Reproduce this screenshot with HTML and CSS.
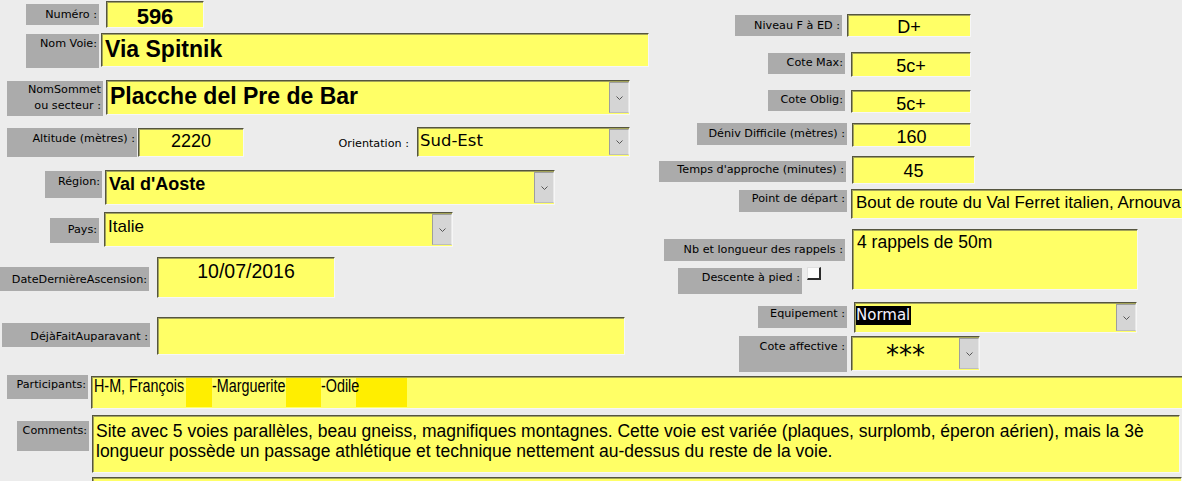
FILE: index.html
```html
<!DOCTYPE html>
<html lang="fr">

<head>
    <meta charset="UTF-8">
    <meta name="viewport" content="width=device-width, initial-scale=1.0">
    <title>Voies</title>
    <link rel="stylesheet" href="styles.css">
</head>

<body>
    <div class="form">
        <div class="top">
            <div class="col-left">
                <div class="row row-numero">
                    <div class="lbl">Numéro :</div>
                    <div class="fld v-num">596</div>
                </div>
                <div class="row row-voie">
                    <div class="lbl">Nom Voie:</div>
                    <div class="fld v-voie">Via Spitnik</div>
                </div>
                <div class="row row-sommet">
                    <div class="lbl">NomSommet<br>ou secteur :</div>
                    <div class="fld combo">
                        <div class="val v-sommet">Placche del Pre de Bar</div>
                        <div class="btn"><svg width="7" height="4" viewBox="0 0 7 4"><polyline points="0.5,0.5 3.5,3.5 6.5,0.5" fill="none" stroke="#555" stroke-width="1"/></svg></div>
                    </div>
                </div>
                <div class="row row-alt">
                    <div class="lbl">Altitude (mètres) :</div>
                    <div class="fld v-alt">2220</div>
                    <div class="plain">Orientation :</div>
                    <div class="fld combo f-orient">
                        <div class="val v-orient">Sud-Est</div>
                        <div class="btn"><svg width="7" height="4" viewBox="0 0 7 4"><polyline points="0.5,0.5 3.5,3.5 6.5,0.5" fill="none" stroke="#555" stroke-width="1"/></svg></div>
                    </div>
                </div>
                <div class="row row-region">
                    <div class="lbl">Région:</div>
                    <div class="fld combo">
                        <div class="val v-region">Val d'Aoste</div>
                        <div class="btn"><svg width="7" height="4" viewBox="0 0 7 4"><polyline points="0.5,0.5 3.5,3.5 6.5,0.5" fill="none" stroke="#555" stroke-width="1"/></svg></div>
                    </div>
                </div>
                <div class="row row-pays">
                    <div class="lbl">Pays:</div>
                    <div class="fld combo">
                        <div class="val v-pays">Italie</div>
                        <div class="btn"><svg width="7" height="4" viewBox="0 0 7 4"><polyline points="0.5,0.5 3.5,3.5 6.5,0.5" fill="none" stroke="#555" stroke-width="1"/></svg></div>
                    </div>
                </div>
                <div class="row row-date">
                    <div class="lbl">DateDernièreAscension:</div>
                    <div class="fld v-date">10/07/2016</div>
                </div>
                <div class="row row-deja">
                    <div class="lbl">DéjàFaitAuparavant :</div>
                    <div class="fld"></div>
                </div>
            </div>

            <div class="col-right">
                <div class="row r-niveau">
                    <div class="lbl">Niveau F à ED :</div>
                    <div class="fld v-c v-niveau">D+</div>
                </div>
                <div class="row r-max">
                    <div class="lbl">Cote Max:</div>
                    <div class="fld v-c">5c+</div>
                </div>
                <div class="row r-oblig">
                    <div class="lbl">Cote Oblig:</div>
                    <div class="fld v-c">5c+</div>
                </div>
                <div class="row r-deniv">
                    <div class="lbl">Déniv Difficile (mètres) :</div>
                    <div class="fld v-c">160</div>
                </div>
                <div class="row r-temps">
                    <div class="lbl">Temps d'approche (minutes) :</div>
                    <div class="fld v-c">45</div>
                </div>
                <div class="row r-depart">
                    <div class="lbl">Point de départ :</div>
                    <div class="fld v-txt">Bout de route du Val Ferret italien, Arnouva</div>
                </div>
                <div class="row r-rappels">
                    <div class="sub">
                        <div class="lbl l-nb">Nb et longueur des rappels :</div>
                        <div class="sub-row">
                            <div class="lbl l-desc">Descente à pied :</div>
                            <div class="check"></div>
                        </div>
                    </div>
                    <div class="fld v-txt v-rappels">4 rappels de 50m</div>
                </div>
                <div class="row r-equip">
                    <div class="lbl">Equipement :</div>
                    <div class="fld combo">
                        <div class="val v-equip"><span class="sel">Normal</span></div>
                        <div class="btn"><svg width="7" height="4" viewBox="0 0 7 4"><polyline points="0.5,0.5 3.5,3.5 6.5,0.5" fill="none" stroke="#555" stroke-width="1"/></svg></div>
                    </div>
                </div>
                <div class="row r-affect">
                    <div class="lbl">Cote affective :</div>
                    <div class="fld combo">
                        <div class="val v-stars">***</div>
                        <div class="btn"><svg width="7" height="4" viewBox="0 0 7 4"><polyline points="0.5,0.5 3.5,3.5 6.5,0.5" fill="none" stroke="#555" stroke-width="1"/></svg></div>
                    </div>
                </div>
            </div>
        </div>

        <div class="row row-part">
            <div class="lbl">Participants:</div>
            <div class="fld v-part">
                <span class="t t1"><span>H-M, François</span></span><span class="mask m1"></span><span class="t t2"><span>-Marguerite</span></span><span class="mask m2"></span><span class="t t3"><span>-Odile</span></span><span class="mask m3"></span>
            </div>
        </div>
        <div class="row row-comm">
            <div class="lbl">Comments:</div>
            <div class="fld v-comm">Site avec 5 voies parallèles, beau gneiss, magnifiques montagnes. Cette voie est variée (plaques, surplomb, éperon aérien), mais la 3è<br>longueur possède un passage athlétique et technique nettement au-dessus du reste de la voie.</div>
        </div>
        <div class="row row-next">
            <div class="fld"></div>
        </div>
    </div>
</body>

</html>
```
FILE: styles.css
```css
html,
body {
    margin: 0;
    padding: 0;
    overflow: hidden;
}

body {
    width: 1182px;
    height: 481px;
    background: #ececec;
    color: #000;
}

.top {
    display: flex;
    height: 375px;
}

.col-left {
    width: 655px;
    flex-shrink: 0;
    padding-top: 1px;
}

.col-right {
    width: 527px;
    flex-shrink: 0;
    padding-top: 14px;
}

.row {
    display: flex;
    align-items: flex-start;
    box-sizing: border-box;
}

/* labels */
.lbl {
    flex-shrink: 0;
    box-sizing: border-box;
    background: #ababab;
    color: #000;
    font-family: "DejaVu Sans", sans-serif;
    font-size: 11.2px;
    line-height: 13px;
    text-align: right;
    padding: 3px 2px 0 0;
    white-space: nowrap;
}

.plain {
    flex-shrink: 0;
    width: 165px;
    margin-top: 10px;
    font-family: "DejaVu Sans", sans-serif;
    font-size: 11.2px;
    line-height: 13px;
    text-align: right;
    color: #000;
}

/* fields */
.fld {
    flex-shrink: 0;
    box-sizing: border-box;
    background: #ffff66;
    border-top: 1px solid #55553f;
    border-left: 1px solid #55553f;
    border-right: 1px solid #f6f6f6;
    border-bottom: 1px solid #f6f6f6;
    box-shadow: inset 1px 1px 0 #a3a35a;
    font-family: "Liberation Sans", Arial, sans-serif;
    font-size: 18px;
    line-height: 1;
    white-space: nowrap;
    overflow: hidden;
}

.combo {
    display: flex;
    align-items: stretch;
}

.combo .val {
    flex: 1;
    overflow: hidden;
}

.btn {
    width: 20px;
    margin: 1px 0 1px;
    box-sizing: border-box;
    background: #d5d5d5;
    border: 1px solid #9e9e9e;
    border-right-color: #e8e8e8;
    border-bottom-color: #bdbdbd;
    display: flex;
    align-items: center;
    justify-content: center;
}

.v-c {
    text-align: center;
    padding-top: 4px;
}

.v-txt {
    font-size: 17px;
    padding: 4px 0 0 4px;
}

/* left column rows */
.row-numero {
    height: 32px;
}

.row-numero .lbl {
    margin: 3px 0 0 26px;
    width: 73px;
    height: 21px;
    padding-top: 4px;
}

.v-num {
    margin-left: 7px;
    width: 98px;
    height: 27px;
    font-size: 22px;
    font-weight: bold;
    text-align: center;
    padding-top: 4px;
}

.row-voie {
    height: 47px;
}

.row-voie .lbl {
    margin: 1px 0 0 26px;
    width: 73px;
    height: 34px;
}

.v-voie {
    margin-left: 2px;
    width: 548px;
    height: 34px;
    font-size: 23px;
    font-weight: bold;
    padding: 3.5px 0 0 3px;
}

.row-sommet {
    height: 47px;
}

.row-sommet .lbl {
    margin: 1px 0 0 7px;
    width: 96px;
    height: 35px;
    line-height: 16px;
    padding-top: 1px;
}

.row-sommet .fld {
    margin-left: 3px;
    width: 524px;
    height: 35px;
}

.v-sommet {
    font-size: 23px;
    font-weight: bold;
    padding: 3.5px 0 0 3px;
}

.row-alt {
    height: 43px;
}

.row-alt .lbl {
    margin: 1px 0 0 7px;
    width: 130px;
    height: 29px;
    padding-top: 3.5px;
}

.v-alt {
    margin: 1px 0 0 1px;
    width: 106px;
    height: 29px;
    text-align: center;
    padding-top: 3px;
}

.f-orient {
    margin-left: 8px;
    width: 213px;
    height: 30px;
}

.v-orient {
    font-family: "DejaVu Sans", sans-serif;
    font-size: 16.5px;
    padding: 5px 0 0 2px;
}

.row-region {
    height: 42px;
}

.row-region .lbl {
    margin: 1px 0 0 45px;
    width: 57px;
    height: 27px;
    padding-top: 4px;
}

.row-region .fld {
    margin-left: 3px;
    width: 450px;
    height: 35px;
}

.v-region {
    font-weight: bold;
    padding: 4px 0 0 3px;
}

.row-pays {
    height: 45px;
}

.row-pays .lbl {
    margin: 6px 0 0 50px;
    width: 49px;
    height: 25px;
    padding-top: 4.5px;
}

.row-pays .fld {
    margin-left: 5px;
    width: 349px;
    height: 35px;
}

.v-pays {
    font-size: 17px;
    padding: 4.5px 0 0 3px;
}

.row-date {
    height: 60px;
}

.row-date .lbl {
    margin: 10px 0 0 0;
    width: 149px;
    height: 24px;
    padding-top: 5.5px;
}

.v-date {
    margin-left: 8px;
    width: 178px;
    height: 41px;
    font-size: 19.5px;
    text-align: center;
    padding-top: 3.5px;
}

.row-deja .lbl {
    margin: 6px 0 0 2px;
    width: 148px;
    height: 24px;
    padding-top: 6.5px;
}

.row-deja .fld {
    margin-left: 7px;
    width: 468px;
    height: 38px;
}

/* right column rows */
.r-niveau {
    height: 38px;
}

.r-niveau .lbl {
    margin: 1px 0 0 80px;
    width: 107px;
    height: 21px;
    padding-top: 4px;
}

.r-niveau .fld {
    margin-left: 5px;
    width: 124px;
    height: 23px;
    padding-top: 3px;
}

.r-max {
    height: 38px;
}

.r-max .lbl,
.r-oblig .lbl {
    margin: 1px 0 0 113px;
    width: 77px;
    height: 21px;
}

.r-max .fld {
    margin-left: 6px;
    width: 120px;
    height: 25px;
}

.r-oblig {
    height: 33px;
}

.r-oblig .lbl {
    margin-top: 0;
}

.r-oblig .fld {
    margin-left: 6px;
    width: 120px;
    height: 23px;
}

.r-deniv {
    height: 33px;
}

.r-deniv .lbl {
    margin-left: 42px;
    width: 150px;
    height: 22px;
    padding-top: 4px;
}

.r-deniv .fld {
    margin-left: 5px;
    width: 119px;
    height: 24px;
}

.r-temps {
    height: 33px;
}

.r-temps .lbl {
    margin: 5px 0 0 4px;
    width: 187px;
    height: 21px;
    padding-top: 2px;
}

.r-temps .fld {
    margin-left: 6px;
    width: 123px;
    height: 28px;
    padding-top: 5px;
}

.r-depart {
    height: 40px;
}

.r-depart .lbl {
    margin: 1px 0 0 84px;
    width: 108px;
    height: 22px;
    padding-top: 2px;
}

.r-depart .fld {
    margin-left: 4px;
    width: 340px;
    height: 30px;
    border-right: 0;
}

.r-rappels {
    height: 73px;
}

.sub {
    width: 190px;
    flex-shrink: 0;
}

.l-nb {
    margin: 10px 0 0 9px;
    width: 181px;
    height: 22px;
    padding-top: 3.5px;
}

.sub-row {
    display: flex;
    align-items: flex-start;
    margin-top: 7px;
}

.l-desc {
    margin-left: 23px;
    width: 124px;
    height: 26px;
}

.check {
    margin: -1px 0 0 5px;
    width: 14px;
    height: 13px;
    box-sizing: border-box;
    background: #fbfbfb;
    border-top: 1px solid #e0e0e0;
    border-left: 1px solid #e0e0e0;
    border-right: 2px solid #2a2a2a;
    border-bottom: 2px solid #2a2a2a;
}

.v-rappels {
    margin-left: 7px;
    width: 286px;
    height: 61px;
    font-size: 17.5px;
}

.r-equip {
    height: 34px;
}

.r-equip .lbl {
    margin: 4px 0 0 103px;
    width: 89px;
    height: 22px;
    padding-top: 1px;
}

.r-equip .fld {
    margin-left: 7px;
    width: 283px;
    height: 31px;
}

.v-equip {
    padding: 2px 0 0 1px;
}

.sel {
    display: inline-block;
    background: #000;
    color: #f4f2ff;
    font-family: "DejaVu Sans", sans-serif;
    font-size: 15px;
    line-height: 19px;
    padding-right: 1px;
}

.r-affect .lbl {
    margin-left: 84px;
    width: 108px;
    height: 36px;
    padding-top: 4px;
}

.r-affect .fld {
    margin-left: 4px;
    width: 129px;
    height: 35px;
}

.v-stars {
    text-align: center;
    font-family: "DejaVu Sans", sans-serif;
    font-size: 26px;
    padding-top: 5px;
}

/* bottom rows */
.row-part {
    height: 40px;
}

.row-part .lbl {
    margin-left: 7px;
    width: 81px;
    height: 24px;
}

.v-part {
    margin: 1px 0 0 3px;
    width: 1095px;
    height: 33px;
    border-right: 0;
    display: flex;
    align-items: flex-start;
    padding-left: 2px;
}

.v-part .t {
    display: block;
    flex-shrink: 0;
    overflow: visible;
    font-size: 17.5px;
    padding-top: 1px;
}

.v-part .t span {
    display: inline-block;
    transform: scaleX(0.82);
    transform-origin: 0 0;
}

.t1 {
    width: 92px;
}

.t2 {
    width: 74px;
}

.t3 {
    width: 35px;
}

.mask {
    display: block;
    flex-shrink: 0;
    margin-top: 1px;
    height: 29px;
    background: #ffee00;
}

.m1 {
    width: 26px;
}

.m2 {
    width: 35px;
}

.m3 {
    width: 51px;
}

.row-comm {
    height: 62px;
}

.row-comm .lbl {
    margin: 6px 0 0 17px;
    width: 72px;
    height: 30px;
}

.v-comm {
    margin-left: 3px;
    width: 1088px;
    height: 58px;
    font-size: 17.5px;
    line-height: 20px;
    padding: 5px 0 0 3px;
}

.row-next .fld {
    margin-left: 92px;
    width: 1090px;
    height: 20px;
}
```
